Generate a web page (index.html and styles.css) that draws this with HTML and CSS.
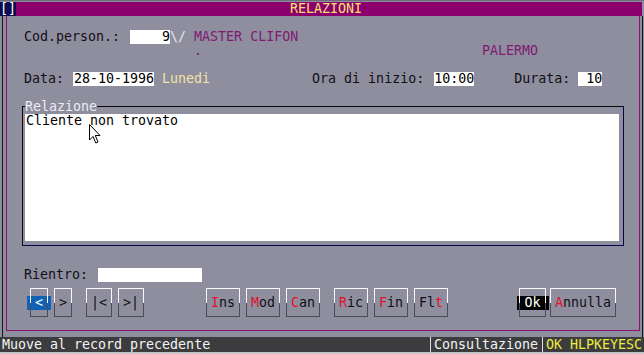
FILE: index.html
```html
<!DOCTYPE html>
<html lang="it">
<head>
    <meta charset="UTF-8">
    <meta name="viewport" content="width=device-width, initial-scale=1.0">
    <link rel="stylesheet" href="styles.css">
    <title>Relazioni</title>
</head>
<body>
    <div class="screen">
        <div class="titlebar">
            <span class="sysbox">[]</span>
            <span class="title">RELAZIONI</span>
        </div>

        <div class="window">
            <div class="panel">
                <div class="row row-cod">
                    <span class="label">Cod.person.:</span>
                    <span class="field field-cod">9</span>
                    <span class="lookup">\/</span>
                    <span class="info info-name">MASTER CLIFON</span>
                </div>
                <div class="row row-city">
                    <span class="info">.</span>
                    <span class="info info-city">PALERMO</span>
                </div>
                <div class="row row-data">
                    <span class="label">Data:</span>
                    <span class="field field-date">28-10-1996</span>
                    <span class="weekday">Lunedi</span>
                    <span class="label label-ora">Ora di inizio:</span>
                    <span class="field field-ora">10:00</span>
                    <span class="label label-durata">Durata:</span>
                    <span class="field field-durata">10</span>
                </div>

                <div class="memo">
                    <span class="memo-title">Relazione</span>
                    <div class="memo-text">Cliente non trovato</div>
                    <svg class="pointer" width="12" height="20" viewBox="0 0 12 20">
                        <path d="M0.5 0.5 L0.5 16 L4 12.5 L6.8 19 L9 18 L6.3 11.5 L11 11.5 Z" fill="#fff" stroke="#000" stroke-width="1"/>
                    </svg>
                </div>

                <div class="row row-rientro">
                    <span class="label">Rientro:</span>
                    <span class="field field-rientro"></span>
                </div>

                <div class="toolbar">
                    <div class="btn-group group-nav">
                        <span class="btn btn-arrow focus-blue"><span class="cap">&lt;</span></span>
                        <span class="btn btn-arrow"><span class="cap">&gt;</span></span>
                    </div>
                    <div class="btn-group group-ends">
                        <span class="btn btn-end"><span class="cap">|&lt;</span></span>
                        <span class="btn btn-end"><span class="cap">&gt;|</span></span>
                    </div>
                    <div class="btn-group group-edit">
                        <span class="btn btn-cmd"><span class="cap"><b class="hk">I</b>ns</span></span>
                        <span class="btn btn-cmd"><span class="cap"><b class="hk">M</b>od</span></span>
                        <span class="btn btn-cmd"><span class="cap"><b class="hk">C</b>an</span></span>
                    </div>
                    <div class="btn-group group-find">
                        <span class="btn btn-cmd"><span class="cap"><b class="hk">R</b>ic</span></span>
                        <span class="btn btn-cmd"><span class="cap"><b class="hk">F</b>in</span></span>
                        <span class="btn btn-cmd"><span class="cap">Fl<b class="hk">t</b></span></span>
                    </div>
                    <div class="btn-group group-confirm">
                        <span class="btn btn-ok focus-black"><span class="cap">Ok</span></span>
                        <span class="btn btn-cancel"><span class="cap"><b class="hk">A</b>nnulla</span></span>
                    </div>
                </div>
            </div>
        </div>

        <div class="statusbar">
            <span class="status-msg">Muove al record precedente</span>
            <span class="status-mode">Consultazione</span>
            <span class="status-keys">OK HLPKEYESC</span>
        </div>
        <div class="bottom-strip"></div>
    </div>
</body>
</html>
```

FILE: styles.css
```css
body {
    margin: 0;
    background-color: #8f8e9f;
    font-family: 'DejaVu Sans Mono', 'Liberation Mono', monospace;
    font-size: 13.3px;
    line-height: 14px;
    color: #101014;
}

.screen {
    width: 644px;
    height: 354px;
    display: flex;
    flex-direction: column;
    border-top: 1px solid #6c6b7a;
    box-sizing: border-box;
    padding-top: 1px;
}

/* title bar */
.titlebar {
    display: flex;
    height: 14px;
    margin-right: 2px;
}

.sysbox {
    width: 16px;
    background-color: #0c0c4e;
    color: #ffffff;
    text-align: center;
}

.title {
    flex: 1;
    background-color: #8b006c;
    color: #f6e070;
    text-align: center;
    padding-right: 6px;
}

/* window frame */
.window {
    flex: 1;
    display: flex;
    margin: 0 1px 0 2px;
    border-left: 1px solid #14141c;
    border-right: 1px solid #14141c;
    padding: 0 2px 6px 3px;
}

.panel {
    flex: 1;
    position: relative;
    border: 1px solid #8b1070;
    border-top: none;
    display: flex;
    flex-direction: column;
}

.row {
    display: flex;
    height: 14px;
    white-space: pre;
}

.field {
    background-color: #ffffff;
    color: #000000;
    height: 14px;
}

.row-cod {
    margin-top: 14px;
    padding-left: 17px;
}

.field-cod {
    margin-left: 10px;
    width: 40px;
    text-align: right;
}

.lookup {
    color: #e4e4ec;
}

.info {
    color: #7e1a74;
}

.info-name {
    margin-left: 8px;
}

.row-city {
    padding-left: 187px;
}

.info-city {
    margin-left: 280px;
}

.row-data {
    margin-top: 14px;
    padding-left: 17px;
}

.field-date {
    margin-left: 9px;
    width: 81px;
    padding-left: 1px;
    box-sizing: border-box;
}

.weekday {
    margin-left: 8px;
    color: #f2e2a6;
}

.label-ora {
    margin-left: 102px;
}

.field-ora {
    margin-left: 10px;
    width: 40px;
}

.label-durata {
    margin-left: 40px;
}

.field-durata {
    margin-left: 8px;
    width: 24px;
    text-align: right;
}

/* memo box */
.memo {
    position: relative;
    margin: 20px 0 0 15px;
    width: 602px;
    height: 140px;
    box-sizing: border-box;
    border-top: 1px solid #0a0a0a;
    border-left: 1px solid #0a0a0a;
    border-right: 1px solid #06064e;
    border-bottom: 1px solid #06064e;
    padding: 7px 4px 4px 2px;
}

.memo-title {
    position: absolute;
    top: -7px;
    left: 2px;
    height: 8px;
    line-height: 14px;
    overflow: visible;
    background-color: #8f8e9f;
    color: #ececf2;
}

.memo-text {
    height: 127px;
    background-color: #ffffff;
    color: #000000;
    padding-left: 1px;
}

.pointer {
    position: absolute;
    left: 66px;
    top: 17px;
}

.row-rientro {
    margin-top: 22px;
    padding-left: 17px;
}

.field-rientro {
    margin-left: 10px;
    width: 104px;
}

/* buttons */
.toolbar {
    display: flex;
    margin-top: 6px;
    height: 29px;
}

.btn-group {
    display: flex;
    gap: 6px;
}

.group-nav {
    margin-left: 23px;
}

.group-ends {
    margin-left: 14px;
}

.group-edit {
    margin-left: 62px;
}

.group-find {
    margin-left: 14px;
}

.group-confirm {
    margin-left: 71px;
    gap: 4px;
}

.btn {
    position: relative;
    height: 29px;
    display: flex;
    align-items: center;
    justify-content: center;
    color: #101014;
    white-space: pre;
}

.btn::before {
    content: '';
    position: absolute;
    inset: 0;
    border: 1px solid;
    border-image: linear-gradient(to bottom, #fafafa 50%, #4c4c56 50%) 1;
    z-index: 1;
}

.btn .cap {
    height: 14px;
    margin-top: 1px;
}

.btn-arrow {
    width: 18px;
}

.btn-end {
    width: 26px;
}

.btn-cmd {
    width: 34px;
}

.btn-ok {
    width: 27px;
}

.btn-cancel {
    width: 66px;
}

.focus-blue .cap {
    background-color: #1062b4;
    color: #ffffff;
    padding: 0 8px;
}

.focus-black .cap {
    background-color: #000000;
    color: #ffffff;
    padding: 0 8px;
}

.hk {
    font-weight: normal;
    color: #e0102e;
}

/* status bar */
.statusbar {
    display: flex;
    height: 15px;
    background-color: #3c3c3e;
    color: #f4f4f4;
    white-space: pre;
    line-height: 15px;
}

.status-msg {
    width: 428px;
    padding-left: 2px;
}

.status-mode {
    border-left: 1px solid #e0e0e0;
    border-right: 1px solid #e0e0e0;
    padding: 0 4px 0 3px;
    width: 104px;
}

.status-keys {
    padding-left: 3px;
    color: #ecec3c;
}

.bottom-strip {
    height: 2px;
    background-color: #c4c4c8;
}
```
